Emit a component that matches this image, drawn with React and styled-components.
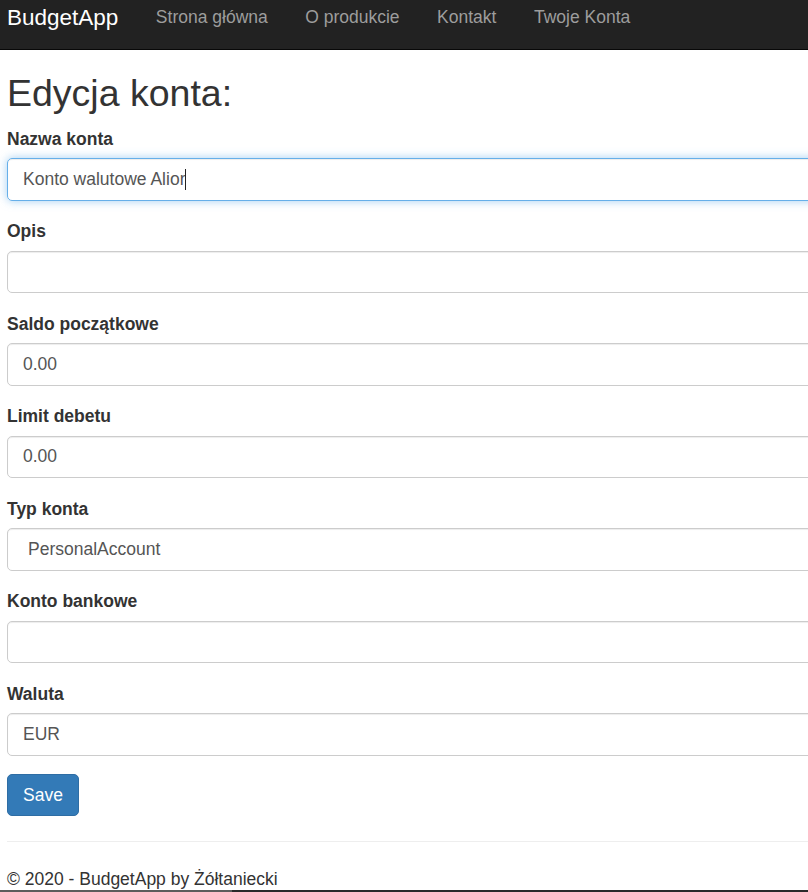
import React from "react";
import styled, { createGlobalStyle } from "styled-components";

const Global = createGlobalStyle`
  html, body { margin: 0; padding: 0; overflow: hidden; background: #fff; }
  body {
    font-family: "Liberation Sans", Arial, Helvetica, sans-serif;
    font-size: 17.5px;
    line-height: 25px;
    color: #333;
  }
  * { box-sizing: border-box; }
`;

const Navbar = styled.nav`
  height: 50px;
  background: #222;
  border-bottom: 1px solid #080808;
  display: flex;
  align-items: flex-start;
  padding: 5px 0 0 7px;
`;

const Brand = styled.a`
  font-size: 22.5px;
  line-height: 25px;
  color: #fff;
  text-decoration: none;
  padding-right: 18.75px;
`;

const NavLink = styled.a`
  font-size: 17.5px;
  line-height: 25px;
  color: #9d9d9d;
  text-decoration: none;
  padding: 0 18.75px;
`;

const Main = styled.main`
  width: 100%;
  overflow: hidden;
  padding: 0.5px 0 0 7px;
`;

const Title = styled.h2`
  font-size: 37.5px;
  line-height: 41.25px;
  font-weight: 400;
  margin: 22.5px 0 12.5px;
  color: #333;
`;

const Group = styled.div`
  margin-bottom: 18.75px;
`;

const Label = styled.label`
  display: block;
  font-weight: 700;
  line-height: 25px;
  margin-bottom: 6.25px;
`;

const Field = styled.div`
  height: 42.5px;
  width: calc(100% + 20px);
  padding: 7.5px ${(p) => (p.$select ? "20px" : "15px")};
  border: 1px solid ${(p) => (p.$focused ? "#66afe9" : "#ccc")};
  border-radius: 5px;
  color: #555;
  line-height: 25px;
  display: flex;
  align-items: center;
  box-shadow: ${(p) =>
    p.$focused
      ? "inset 0 1px 1px rgba(0,0,0,.075), 0 0 10px rgba(102,175,233,.6)"
      : "inset 0 1px 1px rgba(0,0,0,.075)"};
`;

const Caret = styled.span`
  display: inline-block;
  width: 1px;
  height: 21px;
  background: #222;
`;

const SaveButton = styled.button`
  font-family: inherit;
  font-size: 17.5px;
  line-height: 25px;
  color: #fff;
  background: #337ab7;
  border: 1px solid #2e6da4;
  border-radius: 5px;
  padding: 7.5px 15px;
  display: block;
`;

const Rule = styled.hr`
  border: 0;
  border-top: 1px solid #eee;
  margin: 25px 0;
`;

const Footer = styled.footer`
  p { margin: 0 0 12.5px; }
`;

const BottomBar = styled.div`
  position: fixed;
  left: 0;
  right: 0;
  bottom: 0;
  height: 2px;
  display: flex;
`;

const BarPart = styled.div`
  height: 100%;
  background: ${(p) => p.$color};
  width: ${(p) => p.$w || "auto"};
  flex: ${(p) => (p.$w ? "none" : "1")};
`;

const fields = [
  { label: "Nazwa konta", value: "Konto walutowe Alior", focused: true },
  { label: "Opis", value: "" },
  { label: "Saldo początkowe", value: "0.00" },
  { label: "Limit debetu", value: "0.00" },
  { label: "Typ konta", value: "PersonalAccount", select: true },
  { label: "Konto bankowe", value: "" },
  { label: "Waluta", value: "EUR" },
];

export default function App() {
  return (
    <>
      <Global />
      <Navbar>
        <Brand href="#">BudgetApp</Brand>
        <NavLink href="#">Strona główna</NavLink>
        <NavLink href="#">O produkcie</NavLink>
        <NavLink href="#">Kontakt</NavLink>
        <NavLink href="#">Twoje Konta</NavLink>
      </Navbar>
      <Main>
        <Title>Edycja konta:</Title>
        {fields.map((f) => (
          <Group key={f.label}>
            <Label>{f.label}</Label>
            <Field $focused={f.focused} $select={f.select}>
              {f.value}
              {f.focused && <Caret />}
            </Field>
          </Group>
        ))}
        <SaveButton>Save</SaveButton>
        <Rule />
        <Footer>
          <p>© 2020 - BudgetApp by Żółtaniecki</p>
        </Footer>
      </Main>
      <BottomBar>
        <BarPart $color="#5c5c5c" $w="232px" />
        <BarPart $color="#2a2a2a" />
      </BottomBar>
    </>
  );
}
